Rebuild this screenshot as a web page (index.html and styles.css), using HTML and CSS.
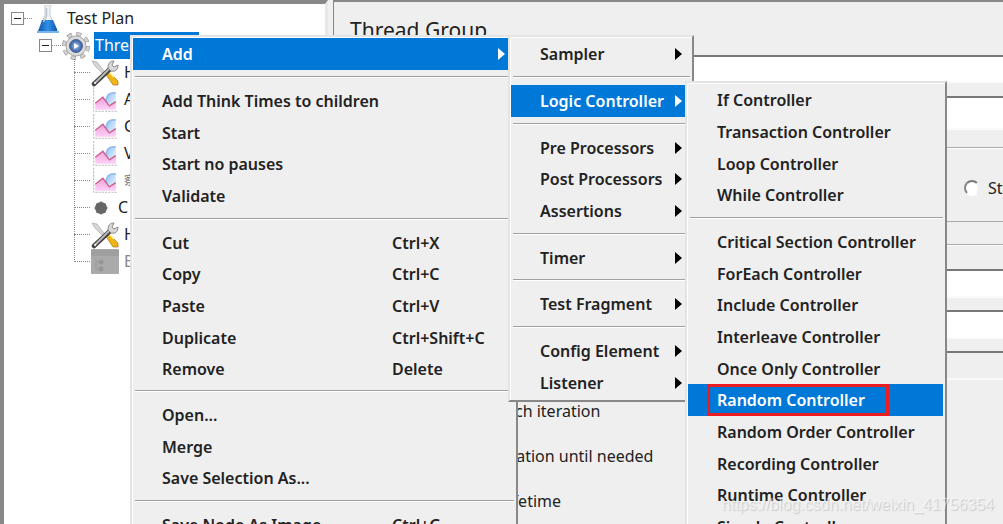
FILE: index.html
```
<!DOCTYPE html>
<html lang="en">
<head>
<meta charset="utf-8">
<title>Test Plan</title>
<link rel="stylesheet" href="styles.css">
</head>
<body>
<svg class="defs" aria-hidden="true">
  <defs>
    <linearGradient id="plot" x1="0" y1="0" x2="0" y2="1"><stop offset="0" stop-color="#f3a0d8"/><stop offset="1" stop-color="#fbd0f8"/></linearGradient>
    <linearGradient id="sky" x1="0" y1="0" x2="1" y2="1"><stop offset="0" stop-color="#8fc0f4"/><stop offset="1" stop-color="#f2f9ff"/></linearGradient>
    <linearGradient id="liquid" x1="0" y1="0" x2="1" y2="0"><stop offset="0" stop-color="#0f56ae"/><stop offset=".5" stop-color="#2f90e8"/><stop offset="1" stop-color="#1258ae"/></linearGradient>
    <radialGradient id="lens"><stop offset="0" stop-color="#a9c4ee"/><stop offset="1" stop-color="#2f57a0"/></radialGradient>
    <symbol id="chart" viewBox="0 0 26 26">
      <path d="M2.500 1v22.500H25" fill="none" stroke="#bbb" stroke-dasharray="2 1"/>
      <path d="M14 15c0-7 2-9 9-9v14z" fill="url(#sky)"/>
      <path d="M14 15c0-7 3-9 9-8.500" fill="none" stroke="#8fbcf0" stroke-width="1.500"/>
      <path d="M4 22v-6l7-6 6 8 6-3v7z" fill="url(#plot)"/>
      <path d="M4 16l7-5.500 6 8 6-4" fill="none" stroke="#c85f8c" stroke-width="1.300"/>
    </symbol>
    <symbol id="tools" viewBox="0 0 28 28">
      <path d="M1 2l5 1 7 9 3 3-2 2-10-10z" fill="#d5d5d5" stroke="#aaa" stroke-width=".7"/>
      <path d="M14 14l3-2 10 10v4h-5z" fill="#f0b418" stroke="#b07a10" stroke-width=".7"/>
      <path d="M18 13l5 5" stroke="#fff08a" stroke-width="1.500"/>
      <path d="M3 25L19 10" stroke="#444" stroke-width="4.500" stroke-linecap="round"/>
      <path d="M4 24L19 9" stroke="#bbb" stroke-width="1.800"/>
      <path d="M17 9c0-5 2-7 6-7l-2 4 2 2 4-2c0 5-3 7-7 6z" fill="#d8d8d8" stroke="#888"/>
      <circle cx="4" cy="24" r="1" fill="#fff"/>
    </symbol>
  </defs>
</svg>
<div class="app">
  <nav class="tree" aria-label="Test Plan">
    <div class="row root">
      <span class="toggle"></span><span class="dots"></span>
      <svg class="icon" viewBox="0 0 28 28"><path d="M11 0h6l-1 2v8l6 14q2 3-1 3H6q-3 0-1-3l6-14V2z" fill="#edf3f7" stroke="#c4ccd2"/><path d="M8 15h11l4 9q1 3-2 3H6q-3 0-1-3z" fill="url(#liquid)"/><path d="M3 27h22" stroke="#79b4ea" stroke-width="2"/><path d="M12.500 3v8l-3 6" fill="none" stroke="#bcc6cd" stroke-width="1.500"/></svg>
      <span class="label">Test Plan</span>
    </div>
    <div class="row group">
      <span class="toggle"></span><span class="dots short"></span>
      <svg class="icon" viewBox="0 0 28 28"><circle cx="14" cy="14" r="12" fill="none" stroke="#999" stroke-width="4" stroke-dasharray="5 4.420"/><circle cx="14" cy="14" r="12" fill="none" stroke="#d3d3d3" stroke-width="2.600" stroke-dasharray="4 5.420" stroke-dashoffset="-.5"/><circle cx="14" cy="14" r="10" fill="#dcdcdc" stroke="#aaa"/><circle cx="14" cy="14" r="6.500" fill="url(#lens)" stroke="#556a94"/><path d="M12 11l5 3-5 3z" fill="#fff"/></svg>
      <span class="label selected">Thread</span>
    </div>
    <ul class="children">
      <li class="row"><span class="dots"></span><svg class="icon"><use href="#tools"/></svg><span class="label">H</span></li>
      <li class="row"><span class="dots"></span><svg class="icon"><use href="#chart"/></svg><span class="label">A</span></li>
      <li class="row"><span class="dots"></span><svg class="icon"><use href="#chart"/></svg><span class="label">G</span></li>
      <li class="row"><span class="dots"></span><svg class="icon"><use href="#chart"/></svg><span class="label">V</span></li>
      <li class="row"><span class="dots"></span><svg class="icon"><use href="#chart"/></svg><span class="label small">察</span></li>
      <li class="row"><span class="dots"></span><svg class="icon narrow" viewBox="0 0 22 28"><circle cx="10" cy="14" r="6" fill="#666"/><path d="M10 7.500v13M3.500 14h13M5.500 9.500l9 9M14.500 9.500l-9 9" stroke="#666" stroke-width="1.500"/></svg><span class="label">C</span></li>
      <li class="row"><span class="dots"></span><svg class="icon"><use href="#tools"/></svg><span class="label">H</span></li>
      <li class="row"><span class="dots"></span><svg class="icon" viewBox="0 0 28 28"><rect y="1" width="28" height="25" rx="1" fill="#aaa"/><path d="M0 2h28v6H0z" fill="#9f9f9f"/><path d="M5 10v11h3M5 14h3" stroke="#999" fill="none"/><circle cx="10" cy="14" r="2.500" fill="#969696"/><circle cx="10" cy="21" r="2.500" fill="#969696"/></svg><span class="label muted">B</span></li>
    </ul>
  </nav>
  <main class="panel">
    <h1 class="title">Thread Group</h1>
    <input class="field name" type="text" aria-label="Name">
    <input class="field comments" type="text" aria-label="Comments">
    <div class="box action"><label class="choice"><input type="radio" name="action">Start</label></div>
    <div class="box props">
      <input class="field" type="text" aria-label="Threads">
      <input class="field" type="text" aria-label="Ramp-up">
      <input class="field loop" type="text" aria-label="Loop count" disabled>
    </div>
    <div class="options">
      <span>Same user on each iteration</span>
      <span>Delay Thread creation until needed</span>
      <span>Specify Thread lifetime</span>
    </div>
  </main>
</div>

<div class="menu main-menu" role="menu">
  <button class="item active">Add<span class="arrow"></span></button>
  <hr>
  <button class="item">Add Think Times to children</button>
  <button class="item">Start</button>
  <button class="item">Start no pauses</button>
  <button class="item">Validate</button>
  <hr>
  <button class="item">Cut<kbd>Ctrl+X</kbd></button>
  <button class="item">Copy<kbd>Ctrl+C</kbd></button>
  <button class="item">Paste<kbd>Ctrl+V</kbd></button>
  <button class="item">Duplicate<kbd>Ctrl+Shift+C</kbd></button>
  <button class="item">Remove<kbd>Delete</kbd></button>
  <hr>
  <button class="item">Open...</button>
  <button class="item">Merge</button>
  <button class="item">Save Selection As...</button>
  <hr>
  <button class="item">Save Node As Image<kbd>Ctrl+G</kbd></button>
</div>

<div class="menu add-menu" role="menu">
  <button class="item">Sampler<span class="arrow"></span></button>
  <hr>
  <button class="item active">Logic Controller<span class="arrow"></span></button>
  <hr>
  <button class="item">Pre Processors<span class="arrow"></span></button>
  <button class="item">Post Processors<span class="arrow"></span></button>
  <button class="item">Assertions<span class="arrow"></span></button>
  <hr>
  <button class="item">Timer<span class="arrow"></span></button>
  <hr>
  <button class="item">Test Fragment<span class="arrow"></span></button>
  <hr>
  <button class="item">Config Element<span class="arrow"></span></button>
  <button class="item">Listener<span class="arrow"></span></button>
</div>

<div class="menu logic-menu" role="menu">
  <button class="item">If Controller</button>
  <button class="item">Transaction Controller</button>
  <button class="item">Loop Controller</button>
  <button class="item">While Controller</button>
  <hr>
  <button class="item">Critical Section Controller</button>
  <button class="item">ForEach Controller</button>
  <button class="item">Include Controller</button>
  <button class="item">Interleave Controller</button>
  <button class="item">Once Only Controller</button>
  <button class="item active marked">Random Controller</button>
  <button class="item">Random Order Controller</button>
  <button class="item">Recording Controller</button>
  <button class="item">Runtime Controller</button>
  <button class="item">Simple Controller</button>
</div>
<div class="watermark">https://blog.csdn.net/weixin_41756354</div>
</body>
</html>
```
FILE: styles.css
```
* { box-sizing: border-box; }
html, body { height: 100%; }
body {
  margin: 0;
  position: relative;
  overflow: hidden;
  background: #efefef;
  color: #222;
  font: 16px/24px "Noto Sans", "Noto Sans CJK SC", sans-serif;
}
button, input { font: inherit; color: inherit; }
.defs { position: absolute; width: 0; height: 0; }
.app { display: flex; gap: 5px; height: 100%; }

.tree {
  flex: 0 0 328px;
  padding-top: 1px;
  background: #fff;
  border: solid #888;
  border-width: 4px 0 0 4px;
  border-right: 3px solid #e8e8e8;
}
.row { display: flex; align-items: center; height: 27px; }
.root { padding-left: 7px; }
.group { padding-left: 35px; }
.toggle {
  flex: none;
  width: 13px;
  height: 13px;
  border: 1px solid #888;
  background: linear-gradient(#222, #222) center / 7px 1px no-repeat;
}
.dots { flex: none; width: 16px; margin-right: 1px; border-top: 1px dotted #888; }
.root .dots { width: 8px; margin-right: 1px; }
.root .icon { margin-left: 1px; }
.dots.short { width: 9px; }
.icon { flex: none; width: 28px; height: 28px; }
.icon.narrow { width: 22px; }
.label { margin-left: 4px; padding: 0 1px; line-height: 27px; }
.selected { width: 105px; background: #0078d7; color: #fff; }
.muted { color: #888; }
.small { font-size: 12px; color: #777; }
.children { position: relative; margin: 0 0 0 70px; padding: 0; list-style: none; }
.children::before {
  content: "";
  position: absolute;
  top: 0;
  bottom: 13px;
  border-left: 1px dotted #888;
}

.panel {
  flex: 1;
  min-width: 0;
  overflow: hidden;
  display: flex;
  flex-direction: column;
  border: solid #888;
  border-width: 2px 0 0 1px;
}
.title { margin: 16px 0 12px 16px; font-size: 21px; font-weight: 400; line-height: 25px; }
.field {
  flex: none;
  height: 28px;
  margin: 0 0 0 100px;
  padding: 0 4px;
  border: solid #777;
  border-width: 2px 0 2px 2px;
  border-bottom-color: #fafafa;
  background: #fff;
  outline: 0;
}
.comments { height: 34px; margin-top: 13px; }
.box { border-top: 1px solid #aaa; box-shadow: inset 0 1px #fff; }
.action {
  height: 75px;
  margin: 17px 0 22px;
  padding: 28px 0 0 630px;
  border-bottom: 1px solid #aaa;
}
.choice { display: flex; align-items: center; gap: 8px; white-space: nowrap; }
.choice input {
  appearance: none;
  flex: none;
  width: 16px;
  height: 16px;
  margin: 0;
  border: 2px solid;
  border-color: #777 #eee #fff #888;
  border-radius: 50%;
  background: #fff;
}
.props { display: flex; flex-direction: column; gap: 12px; padding-top: 24px; }
.props .field { height: 29px; }
.props .loop { background: #efefef; }
.options { display: flex; flex-direction: column; gap: 21px; padding: 19px 0 0 56px; white-space: nowrap; }

.menu {
  position: absolute;
  display: flex;
  flex-direction: column;
  padding: 1px 2px 2px 1px;
  background: #efefef;
  border: 2px solid;
  border-color: #e4e4e4 #888 #888 #e4e4e4;
  box-shadow: inset 1px 1px #fff;
}
.main-menu { left: 130px; top: 35px; width: 388px; }
.add-menu { left: 508px; top: 35px; width: 186px; }
.logic-menu { left: 685px; top: 81px; width: 262px; }
.item {
  position: relative;
  flex: none;
  display: flex;
  align-items: center;
  height: 32px;
  padding: 0 0 0 29px;
  border: 0;
  background: none;
  color: #222;
  font-weight: 600;
  text-align: left;
  white-space: nowrap;
}
.item:nth-of-type(3n) { height: 31px; }
.main-menu .item:nth-of-type(10) { height: 31px; }
.active { background: #0078d7; color: #fff; }
.item kbd { position: absolute; left: 259px; font: inherit; }
.arrow {
  margin: 0 8px 0 auto;
  border: 6px solid transparent;
  border-left: 7px solid #000;
  border-right: 0;
}
.main-menu .arrow { margin-right: 9px; }
.active .arrow { border-left-color: #fff; }
.menu hr {
  flex: none;
  width: calc(100% - 2px);
  height: 2px;
  margin: 6px 0 7px 2px;
  border: 0;
  border-top: 1px solid #a0a0a0;
  background: #fff;
}
.marked::after {
  content: "";
  position: absolute;
  inset: 0 54px 0 19px;
  border: 3px solid #ed1c24;
}
.watermark {
  position: absolute;
  right: 9px;
  bottom: 9px;
  color: rgba(255, 255, 255, .5);
  text-shadow: 1px 1px 1px rgba(120, 120, 120, .3);
  font: 16px/20px "Liberation Sans", sans-serif;
}
```
